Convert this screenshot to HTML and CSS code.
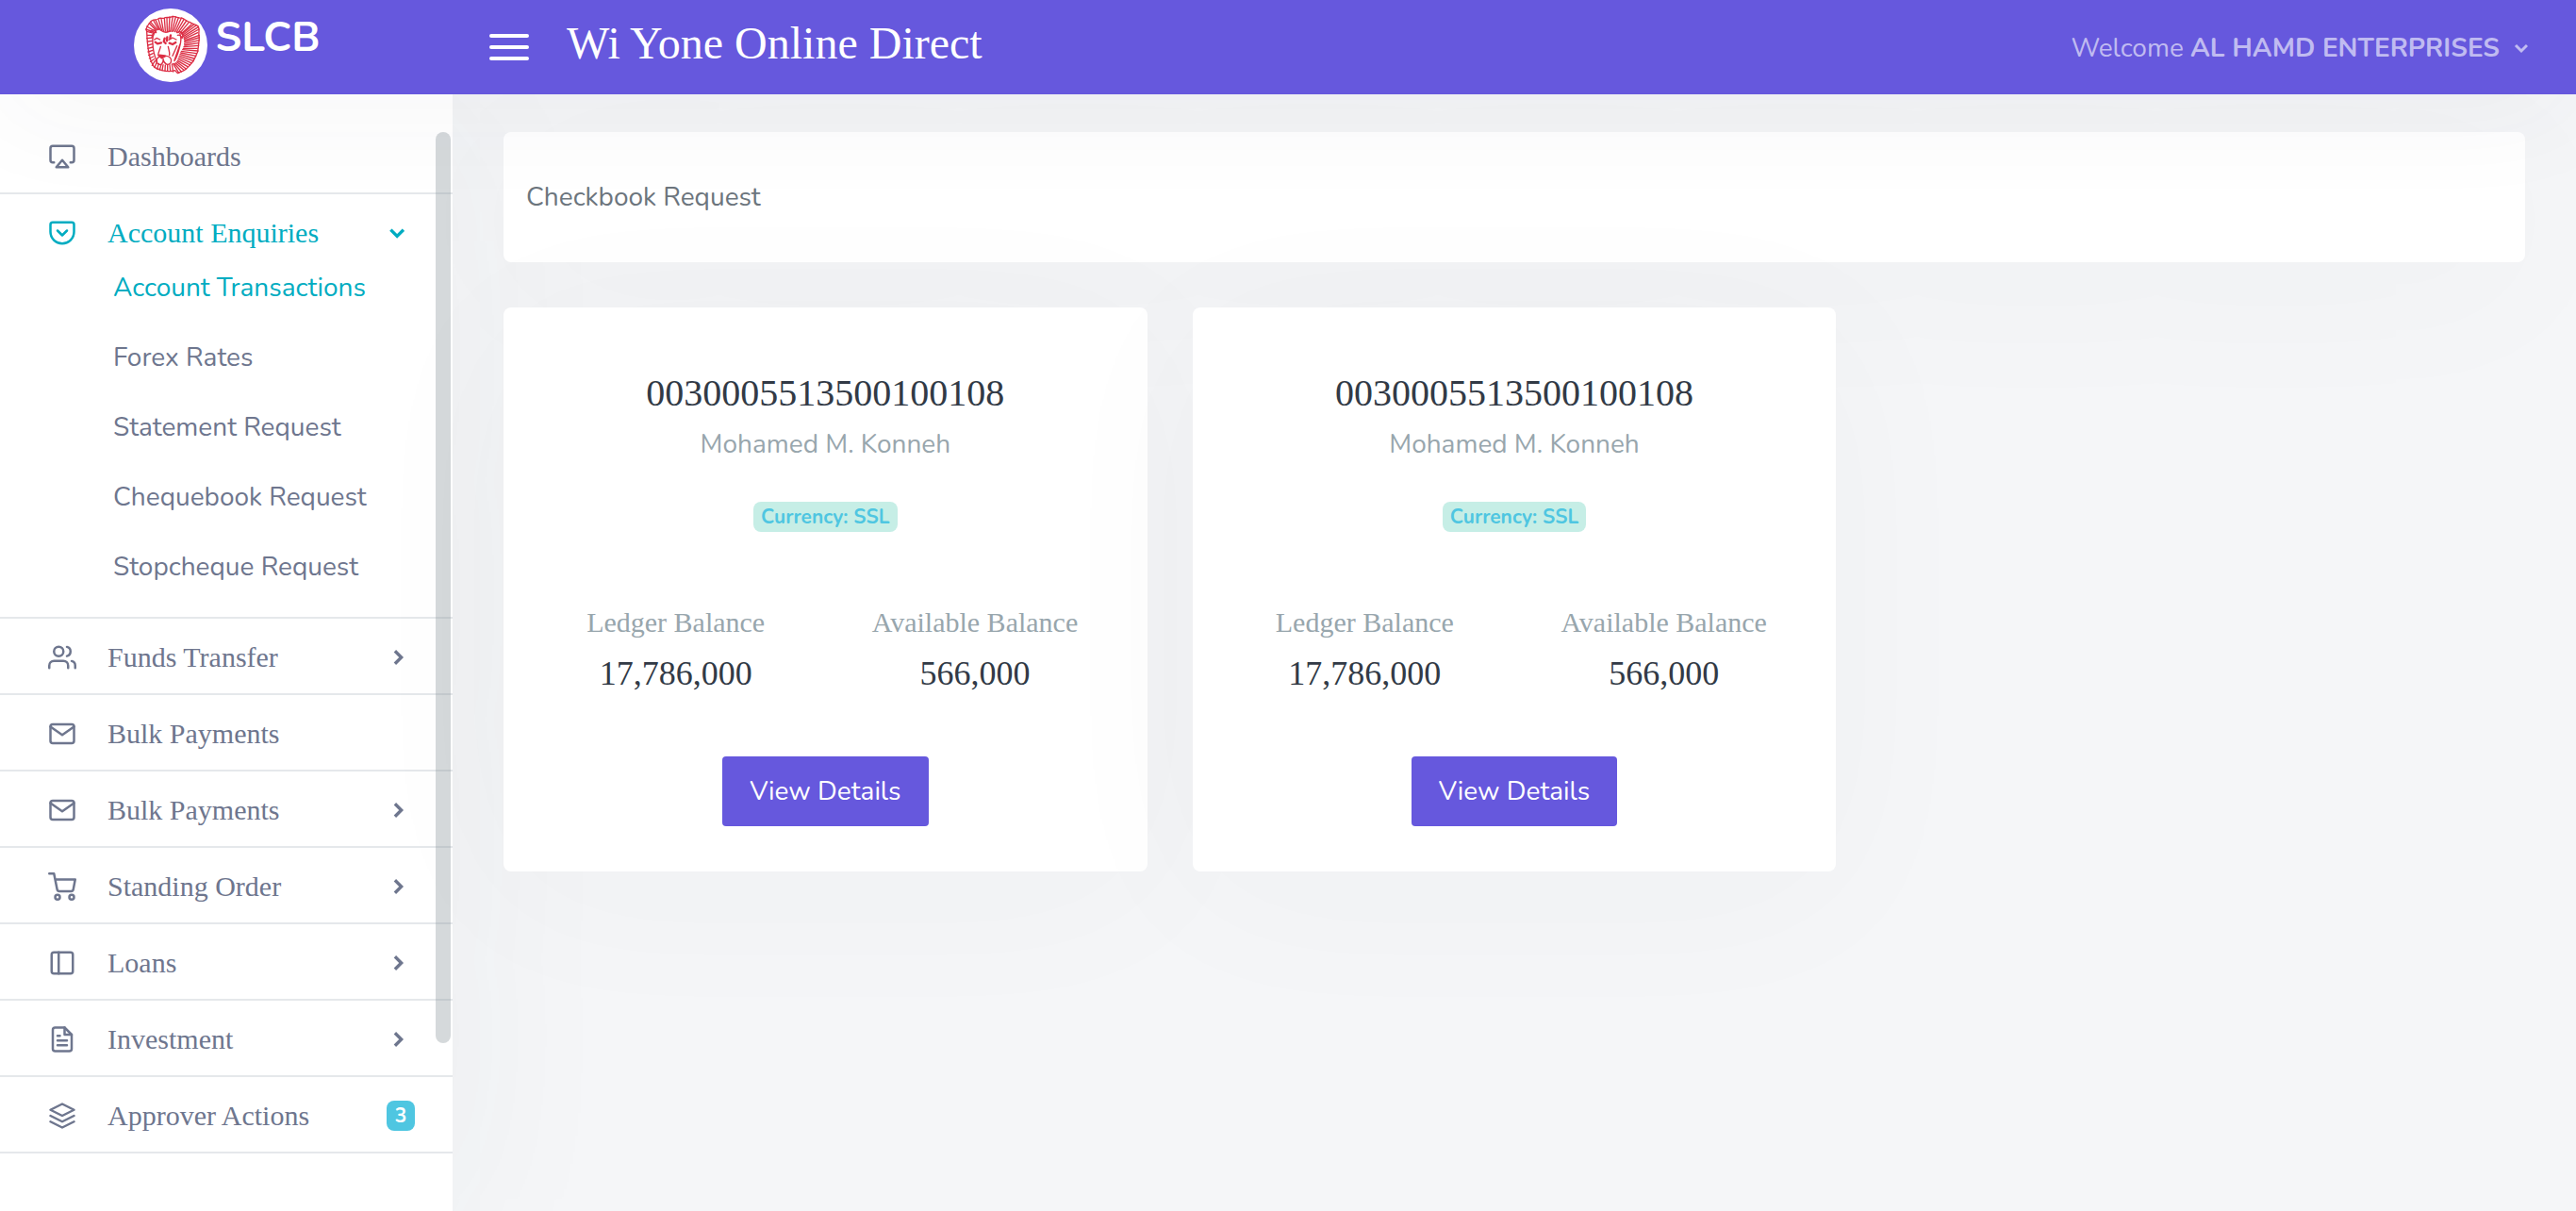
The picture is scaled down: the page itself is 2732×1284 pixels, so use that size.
FILE: index.html
```html
<!DOCTYPE html>
<html lang="en">
<head>
<meta charset="utf-8">
<title>Wi Yone Online Direct</title>
<link rel="stylesheet" href="styles.css">
</head>
<body>
<svg class="sprite" aria-hidden="true">
  <symbol id="airplay" viewBox="0 0 24 24"><path d="M5 17H4a2 2 0 0 1-2-2V5a2 2 0 0 1 2-2h16a2 2 0 0 1 2 2v10a2 2 0 0 1-2 2h-1"/><path d="M12 15l5 6H7z"/></symbol>
  <symbol id="pocket" viewBox="0 0 24 24"><path d="M4 3h16a2 2 0 0 1 2 2v6a10 10 0 0 1-20 0V5a2 2 0 0 1 2-2z"/><path d="M8 10l4 4 4-4"/></symbol>
  <symbol id="users" viewBox="0 0 24 24"><path d="M17 21v-2a4 4 0 0 0-4-4H5a4 4 0 0 0-4 4v2"/><circle cx="9" cy="7" r="4"/><path d="M23 21v-2a4 4 0 0 0-3-3.87"/><path d="M16 3.13a4 4 0 0 1 0 7.75"/></symbol>
  <symbol id="mail" viewBox="0 0 24 24"><path d="M4 4h16a2 2 0 0 1 2 2v12a2 2 0 0 1-2 2H4a2 2 0 0 1-2-2V6a2 2 0 0 1 2-2z"/><path d="M22 6l-10 7L2 6"/></symbol>
  <symbol id="cart" viewBox="0 0 24 24"><circle cx="8" cy="21" r="2"/><circle cx="20" cy="21" r="2"/><path d="M1 1h4l2.68 13.39a2 2 0 0 0 2 1.61h9.72a2 2 0 0 0 2-1.61L23 6H6"/></symbol>
  <symbol id="sidebar" viewBox="0 0 24 24"><rect x="3" y="3" width="18" height="18" rx="2"/><path d="M9 3v18"/></symbol>
  <symbol id="file" viewBox="0 0 24 24"><path d="M14 2H6a2 2 0 0 0-2 2v16a2 2 0 0 0 2 2h12a2 2 0 0 0 2-2V8z"/><path d="M14 2v6h6M16 13H8M16 17H8M10 9H8"/></symbol>
  <symbol id="layers" viewBox="0 0 24 24"><path d="M12 2L2 7l10 5 10-5z"/><path d="M2 17l10 5 10-5M2 12l10 5 10-5"/></symbol>
  <symbol id="chevron-right" viewBox="0 0 16 16"><path d="M7 2l6 6-6 6"/></symbol>
  <symbol id="chevron-down" viewBox="0 0 16 16"><path d="M3 5l6 6 6-6"/></symbol>
</svg>

<header class="topbar">
  <a class="brand" href="#">
    <svg class="brand-mark" viewBox="39 27 234 234" aria-hidden="true">
      <circle cx="156" cy="144" r="117" fill="#fff"/>
      <g class="lion">
        <path d="M104 106L80 100M100 112L82 112M99 120L80 122M98 130L82 132M98 140L83 144M99 150L84 154M99 160L84 165M100 170L86 176M101 180L88 186M103 188L92 196M106 194L97 208M112 198L105 214M118 202L113 220M126 205L121 222M132 206L129 224M139 207L138 225M146 207L146 226M153 206L155 226M160 204L164 228"/>
        <path d="M102 102L77 93M106 99L80 84M110 97L88 74M114 95L92 70M118 94L102 66M123 95L108 64M128 96L117 62M133 98L126 60M139 99L136 58M145 101L144 56M150 101L153 54M155 100L163 52M160 100L172 54M165 100L181 56M170 101L190 58M175 102L198 62M180 104L206 66M185 106L214 71M189 108L222 78"/>
        <path d="M192 108L230 78M194 112L238 80M196 116L244 86M198 120L246 93M199 124L242 104M200 129L247 112M200 134L245 120M200 139L247 128M200 144L243 137M198 149L245 145M196 154L241 154M194 158L243 162M190 163L238 170M188 168L236 178M186 173L230 186M184 178L229 194M182 183L221 200M180 188L218 207M178 193L210 212M176 197L205 219M172 200L197 222M168 202L190 228M164 203L182 232"/>
        <path d="M80 100C74 90 84 80 90 72C98 58 112 66 116 60C124 54 132 62 138 56C148 54 156 58 162 52C174 52 182 60 190 57C202 60 208 70 216 70C224 78 234 74 244 84C250 98 242 108 247 118C246 136 244 150 242 164C236 178 232 192 222 202C212 212 206 222 194 226L178 233L170 224C150 230 124 224 104 214C88 194 82 160 80 100z"/>
        <path d="M103 108C96 120 98 136 100 150C101 168 108 186 112 198M186 110C192 122 188 138 184 152C180 168 176 182 168 194M104 126L112 121L122 126M150 127L162 120L174 126M124 148C122 158 116 168 116 176M148 148C150 158 154 168 152 176M176 146L162 178M168 192L186 140"/>
        <path class="lion-heavy" d="M107 134L114 139L126 136M152 137L162 141L172 135M137 122L134 132L140 138M145 118L144 130M156 112L154 122M120 176L138 178L128 184z"/>
        <path d="M132 180C116 176 106 190 114 202C124 210 134 202 132 188C134 204 148 210 156 200C162 186 150 174 132 180M90 102C96 92 108 94 110 104C102 100 98 110 96 118M176 104C188 96 200 106 192 122C190 114 184 110 178 112M124 96C134 104 146 104 154 98"/>
      </g>
    </svg>
    <span class="brand-name">SLCB</span>
  </a>
  <button class="menu-toggle" type="button" aria-label="Toggle menu"><span></span><span></span><span></span></button>
  <h1 class="app-title">Wi Yone Online Direct</h1>
  <button class="account-menu" type="button">
    <span>Welcome <b>AL HAMD ENTERPRISES</b></span>
    <svg class="account-caret" aria-hidden="true"><use href="#chevron-down"/></svg>
  </button>
</header>

<div class="layout">
  <nav class="sidebar" aria-label="Main">
    <ul class="menu">
      <li><a href="#"><svg class="icon"><use href="#airplay"/></svg><span>Dashboards</span></a></li>
      <li class="open"><a href="#"><svg class="icon"><use href="#pocket"/></svg><span>Account Enquiries</span><svg class="caret"><use href="#chevron-down"/></svg></a>
        <ul class="submenu">
          <li><a class="current" href="#">Account Transactions</a></li>
          <li><a href="#">Forex Rates</a></li>
          <li><a href="#">Statement Request</a></li>
          <li><a href="#">Chequebook Request</a></li>
          <li><a href="#">Stopcheque Request</a></li>
        </ul>
      </li>
      <li><a href="#"><svg class="icon"><use href="#users"/></svg><span>Funds Transfer</span><svg class="caret"><use href="#chevron-right"/></svg></a></li>
      <li><a href="#"><svg class="icon"><use href="#mail"/></svg><span>Bulk Payments</span></a></li>
      <li><a href="#"><svg class="icon"><use href="#mail"/></svg><span>Bulk Payments</span><svg class="caret"><use href="#chevron-right"/></svg></a></li>
      <li><a href="#"><svg class="icon"><use href="#cart"/></svg><span>Standing Order</span><svg class="caret"><use href="#chevron-right"/></svg></a></li>
      <li><a href="#"><svg class="icon"><use href="#sidebar"/></svg><span>Loans</span><svg class="caret"><use href="#chevron-right"/></svg></a></li>
      <li><a href="#"><svg class="icon"><use href="#file"/></svg><span>Investment</span><svg class="caret"><use href="#chevron-right"/></svg></a></li>
      <li><a href="#"><svg class="icon"><use href="#layers"/></svg><span>Approver Actions</span><b class="count">3</b></a></li>
    </ul>
    <div class="scroll-thumb"></div>
  </nav>

  <main class="content">
    <section class="card page-heading"><p>Checkbook Request</p></section>
    <div class="accounts">
      <article class="card account">
        <h2>0030005513500100108</h2>
        <p class="holder">Mohamed M. Konneh</p>
        <span class="currency">Currency: SSL</span>
        <dl class="balances">
          <div><dt>Ledger Balance</dt><dd>17,786,000</dd></div>
          <div><dt>Available Balance</dt><dd>566,000</dd></div>
        </dl>
        <button class="details" type="button">View Details</button>
      </article>
      <article class="card account">
        <h2>0030005513500100108</h2>
        <p class="holder">Mohamed M. Konneh</p>
        <span class="currency">Currency: SSL</span>
        <dl class="balances">
          <div><dt>Ledger Balance</dt><dd>17,786,000</dd></div>
          <div><dt>Available Balance</dt><dd>566,000</dd></div>
        </dl>
        <button class="details" type="button">View Details</button>
      </article>
    </div>
  </main>
</div>
</body>
</html>
```
FILE: styles.css
```css
:root {
  --sans: Nunito, Lato, sans-serif;
  --serif: "Liberation Serif", "Times New Roman", serif;
  --primary: #6658dd;
  --active: #00acc1;
  --muted: #6e768e;
  --line: #e5e8eb;
}

* { box-sizing: border-box; }

body {
  margin: 0;
  min-height: 100vh;
  display: flex;
  flex-direction: column;
  background: #f5f6f8;
  color: #6c757d;
  font: 28px/42px var(--sans);
}

h1, h2, p, ul, dl, dd { margin: 0; padding: 0; font-weight: 400; }
ul { list-style: none; }
a { color: inherit; text-decoration: none; }
button { border: 0; font: inherit; cursor: pointer; }

.sprite { position: absolute; width: 0; height: 0; }

/* Top bar */
.topbar {
  position: relative;
  z-index: 2;
  display: flex;
  align-items: center;
  height: 100px;
  padding-right: 51px;
  background: var(--primary);
  box-shadow: 0 16px 120px rgba(56, 65, 74, .05);
  color: #fff;
}

.brand {
  display: flex;
  flex: 0 0 480px;
  gap: 8px;
  justify-content: center;
  padding: 0 0 4px 2px;
}

.brand-mark { width: 78px; height: 78px; }
.lion { fill: none; stroke: #dc2f45; stroke-width: 4; stroke-linecap: round; stroke-linejoin: round; }
.lion-heavy { stroke-width: 7; }
.brand-name { font-size: 44px; line-height: 62px; font-weight: 700; }

.menu-toggle {
  display: flex;
  flex-direction: column;
  gap: 8px;
  margin-left: 39px;
  padding: 0;
  background: none;
}
.menu-toggle span { width: 42px; height: 4px; border-radius: 2px; background: #fff; }

.app-title {
  margin-left: 40px;
  padding-bottom: 8px;
  font: 48px/56px var(--serif);
}

.account-menu {
  display: flex;
  align-items: center;
  gap: 14px;
  margin-left: auto;
  padding: 1px 0 0;
  background: none;
  color: rgba(255, 255, 255, .6);
}
.account-caret { width: 16px; height: 16px; fill: none; stroke: currentColor; stroke-width: 3; }

/* Sidebar */
.layout { display: flex; flex: 1; }

.sidebar {
  position: relative;
  flex: 0 0 480px;
  padding-top: 25px;
  background: #fff;
  box-shadow: 0 24px 192px rgba(56, 65, 74, .06);
}

.menu > li { border-bottom: 2px solid var(--line); color: var(--muted); }
.menu > li > a {
  display: flex;
  align-items: center;
  gap: 33px;
  padding: 21px 51px 18px;
  font: 30px/40px var(--serif);
}
.menu > .open > a { padding-bottom: 0; color: var(--active); }

.icon {
  width: 30px;
  height: 30px;
  fill: none;
  stroke: currentColor;
  stroke-width: 2;
  stroke-linecap: round;
  stroke-linejoin: round;
}
.caret { width: 18px; height: 18px; margin-left: auto; fill: none; stroke: currentColor; stroke-width: 3; }

.count {
  width: 30px;
  margin: 0 -11px 0 auto;
  border-radius: 8px;
  background: #4fc6e1;
  color: #fff;
  font: 700 21px/32px var(--sans);
  text-align: center;
}

.submenu { padding: 1px 0 16px; }
.submenu a { display: block; padding: 16px 24px 16px 120px; }
.submenu .current { color: var(--active); }

.scroll-thumb {
  position: absolute;
  top: 40px;
  right: 2px;
  width: 16px;
  height: calc(100% - 218px);
  border-radius: 8px;
  background: rgba(135, 146, 153, .35);
}

/* Content */
.content {
  position: relative;
  z-index: 1;
  display: flex;
  flex: 1;
  flex-direction: column;
  gap: 48px;
  padding: 40px 54px;
}

.card {
  border-radius: 8px;
  background: #fff;
  box-shadow: 0 24px 192px rgba(56, 65, 74, .03);
}

.page-heading { padding: 48px 24px; }

.accounts { display: grid; grid-template-columns: repeat(3, 1fr); gap: 48px; }

.account {
  display: flex;
  flex-direction: column;
  align-items: center;
  padding: 67px 24px 48px;
}
.account h2 { color: #323a46; font: 40px/48px var(--serif); }
.holder { margin-top: 9px; color: #98a6ad; }

.currency {
  margin-top: 40px;
  padding: 0 8px;
  border-radius: 8px;
  background: #c6eee6;
  color: #4fc6e1;
  font-size: 21px;
  line-height: 32px;
  font-weight: 700;
}

.balances {
  display: grid;
  grid-template-columns: 1fr 1fr;
  width: 100%;
  margin-top: 76px;
  font-family: var(--serif);
  text-align: center;
}
.balances dt { color: #98a6ad; font-size: 30px; line-height: 40px; }
.balances dd { margin-top: 12px; color: #323a46; font-size: 36px; line-height: 44px; }

.details {
  margin-top: 66px;
  padding: 16px 29px;
  border-radius: 4px;
  background: var(--primary);
  color: #fff;
}
```
